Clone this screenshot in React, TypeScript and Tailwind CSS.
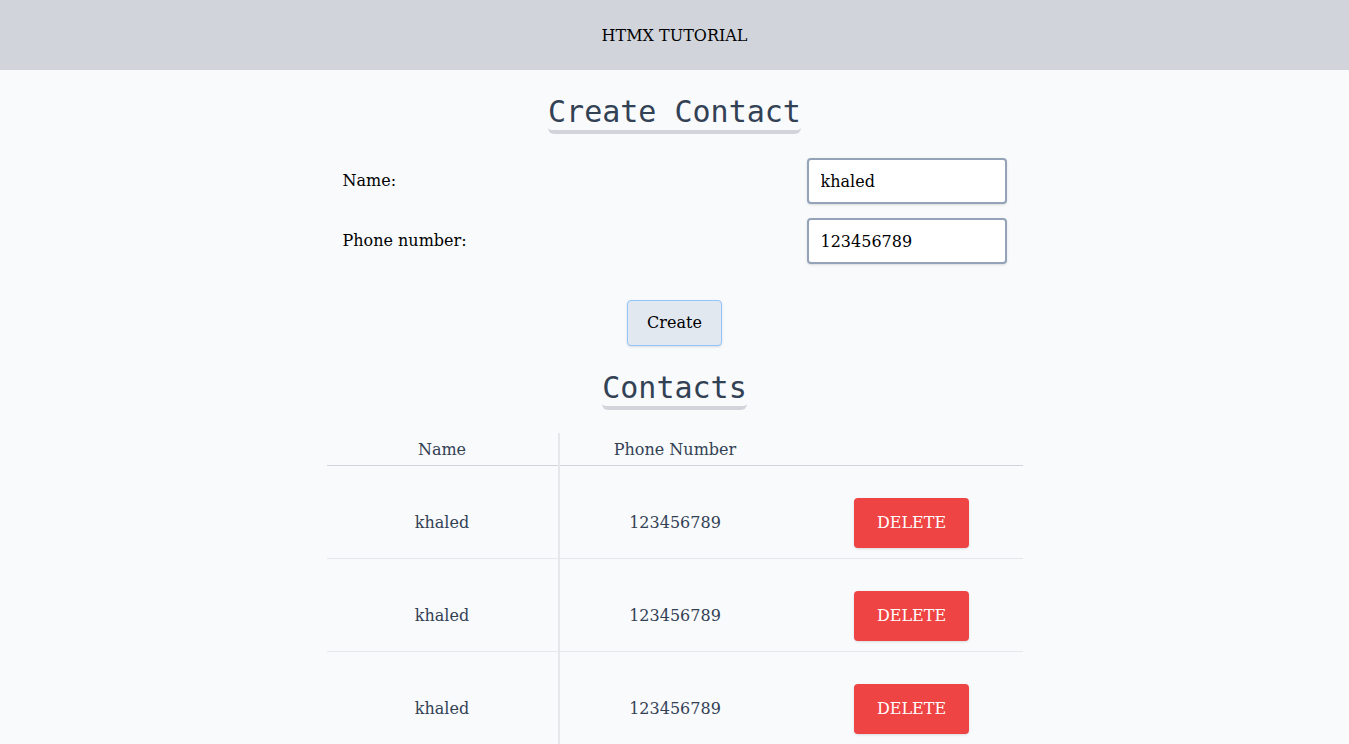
const contacts = [
  { id: 1, name: 'khaled', phone: '123456789' },
  { id: 2, name: 'khaled', phone: '123456789' },
  { id: 3, name: 'khaled', phone: '123456789' },
];

const serif = "font-['DejaVu_Serif',serif]";
const mono = "font-['DejaVu_Sans_Mono',monospace]";

const Heading = ({ children }: { children: string }) => (
  <h2 className={`${mono} text-[30px] leading-[36px] text-[#334155] border-b-4 border-[#d1d5db] rounded-b-md`}>
    {children}
  </h2>
);

const App = () => {
  return (
    <div className={`${serif} min-h-screen bg-[#f8fafc] text-black`}>
      <header className="h-[70px] pt-[2px] bg-[#d1d5db] flex items-center justify-center text-[16px]">
        HTMX TUTORIAL
      </header>

      <main className="flex flex-col items-center">
        <div className="mt-[24px]">
          <Heading>Create Contact</Heading>
        </div>

        <form className="mt-6 w-[696px] px-4 flex flex-col gap-[14px]" onSubmit={(e) => e.preventDefault()}>
          <div className="flex items-center justify-between">
            <label className="text-[16px]">Name:</label>
            <input
              defaultValue="khaled"
              className="w-[200px] h-[46px] px-3 bg-white border-2 border-[#94a3b8] rounded shadow-sm text-[16px] outline-none"
            />
          </div>
          <div className="flex items-center justify-between">
            <label className="text-[16px]">Phone number:</label>
            <input
              defaultValue="123456789"
              className="w-[200px] h-[46px] px-3 bg-white border-2 border-[#94a3b8] rounded shadow-sm text-[16px] outline-none"
            />
          </div>
          <div className="mt-[22px] flex justify-center">
            <button className="w-[95px] h-[46px] bg-[#e2e8f0] border border-[#93c5fd] rounded shadow-sm text-[16px]">
              Create
            </button>
          </div>
        </form>

        <div className="mt-6">
          <Heading>Contacts</Heading>
        </div>

        <table className="mt-[23px] w-[696px] table-fixed border-collapse text-[#334155] text-[16px]">
          <thead>
            <tr className="border-b border-[#d1d5db]">
              <th className="h-[32px] pt-[2px] font-normal border-r-2 border-[#e5e7eb]">Name</th>
              <th className="pt-[2px] font-normal">Phone Number</th>
              <th className="font-normal"></th>
            </tr>
          </thead>
          <tbody>
            {contacts.map((c) => (
              <tr key={c.id} className="border-b border-[#e5e7eb]">
                <td className="pt-[32px] pb-[10px] text-center border-r-2 border-[#e5e7eb]">{c.name}</td>
                <td className="pt-[32px] pb-[10px] text-center">{c.phone}</td>
                <td className="pt-[32px] pb-[10px] text-center">
                  <button className="ml-[10px] w-[115px] h-[50px] bg-[#ef4444] text-white rounded shadow-sm">
                    DELETE
                  </button>
                </td>
              </tr>
            ))}
          </tbody>
        </table>
      </main>
    </div>
  );
};

export default App;
